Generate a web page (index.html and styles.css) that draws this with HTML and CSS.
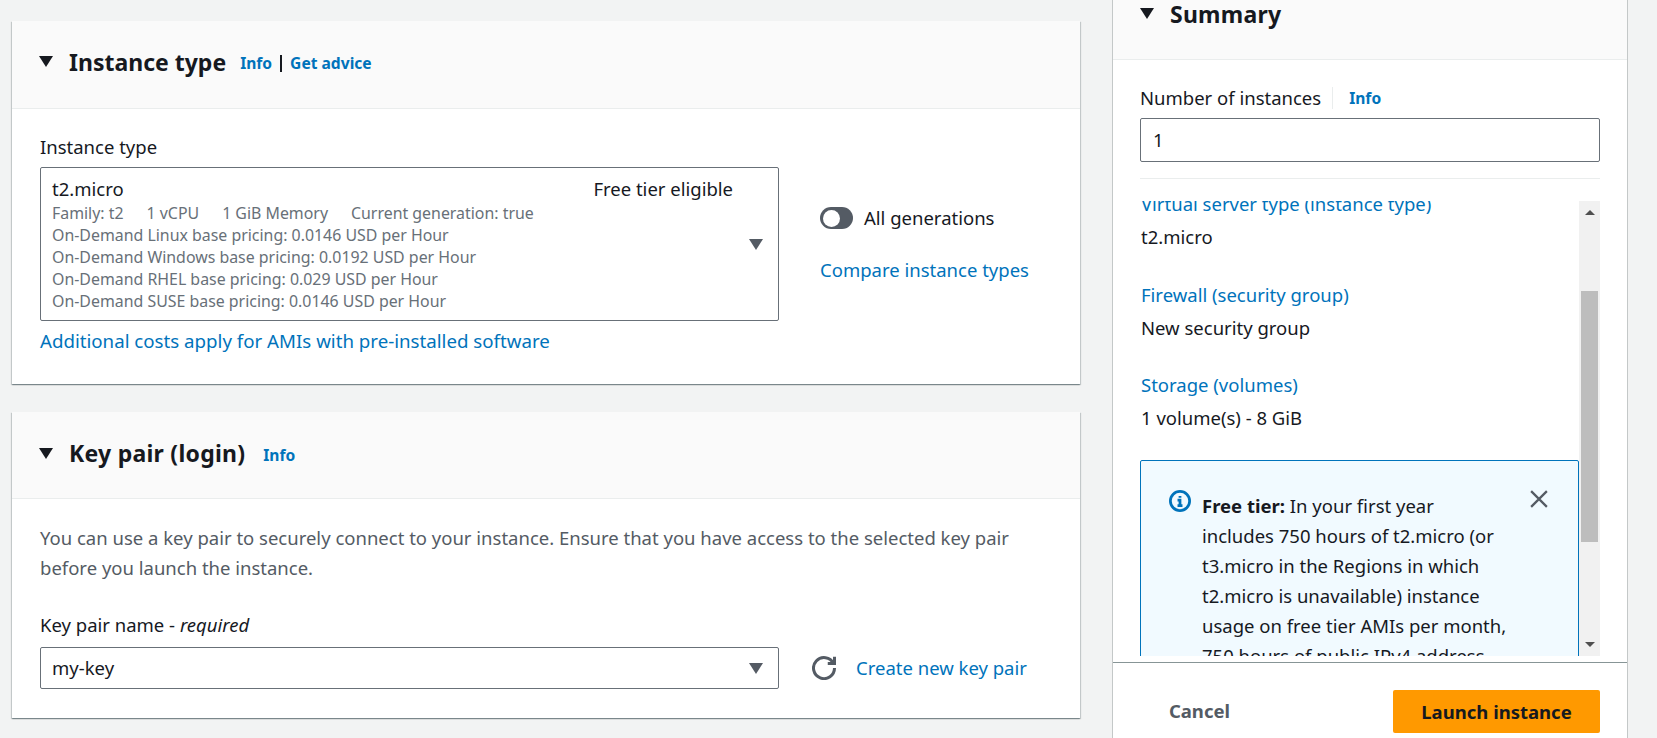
FILE: index.html
```html
<!DOCTYPE html>
<html lang="en">
<head>
    <meta charset="UTF-8">
    <meta name="viewport" content="width=device-width, initial-scale=1.0">
    <title>Launch an instance</title>
    <link rel="stylesheet" href="styles.css">
</head>
<body>
    <div class="page">
        <main class="left-col">
            <section class="card card-type">
                <div class="card-head head-type">
                    <svg class="caret" viewBox="0 0 14 11"><path d="M0 0h14L7 11z"/></svg>
                    <h2>Instance type</h2>
                    <div class="head-links"><a href="#">Info</a><span class="pipe"></span><a href="#">Get advice</a></div>
                </div>
                <div class="card-body body-type">
                    <label class="field-label">Instance type</label>
                    <div class="select-row type-row">
                        <div class="select select-tall">
                            <div class="select-main">
                                <div class="select-top"><span>t2.micro</span><span>Free tier eligible</span></div>
                                <div class="detail detail-specs"><span>Family: t2</span><span>1 vCPU</span><span>1 GiB Memory</span><span>Current generation: true</span></div>
                                <div class="detail">On-Demand Linux base pricing: 0.0146 USD per Hour</div>
                                <div class="detail">On-Demand Windows base pricing: 0.0192 USD per Hour</div>
                                <div class="detail">On-Demand RHEL base pricing: 0.029 USD per Hour</div>
                                <div class="detail">On-Demand SUSE base pricing: 0.0146 USD per Hour</div>
                            </div>
                            <svg class="arrow" viewBox="0 0 14 11"><path d="M0 0h14L7 11z"/></svg>
                        </div>
                        <div class="type-side">
                            <div class="toggle-row"><span class="toggle"><span class="knob"></span></span><span>All generations</span></div>
                            <a class="link" href="#">Compare instance types</a>
                        </div>
                    </div>
                    <a class="link costs" href="#">Additional costs apply for AMIs with pre-installed software</a>
                </div>
            </section>

            <section class="card card-key">
                <div class="card-head head-key">
                    <svg class="caret" viewBox="0 0 14 11"><path d="M0 0h14L7 11z"/></svg>
                    <h2>Key pair (login)</h2>
                    <div class="head-links"><a href="#">Info</a></div>
                </div>
                <div class="card-body body-key">
                    <p class="key-text">You can use a key pair to securely connect to your instance. Ensure that you have access to the selected key pair before you launch the instance.</p>
                    <label class="field-label key-label">Key pair name - <i>required</i></label>
                    <div class="select-row key-row">
                        <div class="select select-short">
                            <div class="select-main">my-key</div>
                            <svg class="arrow" viewBox="0 0 14 11"><path d="M0 0h14L7 11z"/></svg>
                        </div>
                        <svg class="refresh" viewBox="0 0 16 16"><path d="M10.5 5H15V.5"/><path d="M15 8a7 7 0 1 1-.7-3"/></svg>
                        <a class="link" href="#">Create new key pair</a>
                    </div>
                </div>
            </section>
        </main>

        <aside class="summary">
            <div class="summary-head">
                <svg class="caret" viewBox="0 0 14 11"><path d="M0 0h14L7 11z"/></svg>
                <h2>Summary</h2>
            </div>
            <div class="summary-body">
                <div class="count-label"><span>Number of instances</span><span class="count-sep"></span><a href="#">Info</a></div>
                <div class="count-input">1</div>
                <hr class="divider">
                <div class="scroll-area">
                    <div class="scroll-content">
                        <div class="scroll-inner">
                            <a class="link item-link" href="#">Virtual server type (instance type)</a>
                            <div class="item-value item-first">t2.micro</div>
                            <a class="link item-link" href="#">Firewall (security group)</a>
                            <div class="item-value">New security group</div>
                            <a class="link item-link" href="#">Storage (volumes)</a>
                            <div class="item-value">1 volume(s) - 8 GiB</div>
                            <div class="free-tier">
                                <svg class="info-icon" viewBox="0 0 16 16"><circle cx="8" cy="8" r="7"/><path d="M6.2 7.4H8v4M6.2 11.4h3.6M8 4.4v1.2"/></svg>
                                <p><b>Free tier:</b> In your first year includes 750 hours of t2.micro (or t3.micro in the Regions in which t2.micro is unavailable) instance usage on free tier AMIs per month, 750 hours of public IPv4 address usage per month, 30 GiB of EBS storage, 2 million I/Os, 1 GB of snapshots, and 100 GB of bandwidth to the internet.</p>
                                <svg class="close-icon" viewBox="0 0 16 16"><path d="M1 1l14 14M15 1L1 15"/></svg>
                            </div>
                        </div>
                    </div>
                    <div class="scrollbar">
                        <span class="sb-up"></span>
                        <span class="sb-thumb"></span>
                        <span class="sb-down"></span>
                    </div>
                </div>
            </div>
            <div class="summary-foot">
                <a class="cancel" href="#">Cancel</a>
                <button class="launch">Launch instance</button>
            </div>
        </aside>
    </div>
</body>
</html>
```

FILE: styles.css
```css
* {
    box-sizing: border-box;
}
html, body {
    margin: 0;
    height: 738px;
    overflow: hidden;
}
body {
    background: #f2f3f3;
    font-family: "Noto Sans", "Open Sans", sans-serif;
    font-size: 18.5px;
    line-height: 24px;
    color: #16191f;
}
a {
    color: #0073bb;
    text-decoration: none;
}
.page {
    display: flex;
    gap: 32px;
    padding: 0 29px 0 12px;
    height: 738px;
    overflow: hidden;
}

/* left column */
.left-col {
    width: 1069px;
    padding-top: 21px;
    display: flex;
    flex-direction: column;
    gap: 28px;
}
.card {
    background: #fff;
    box-shadow: 0 1px 1px 0 rgba(0,28,36,.3), 1px 1px 1px 0 rgba(0,28,36,.15), -1px 1px 1px 0 rgba(0,28,36,.15);
}
.card-head {
    display: flex;
    align-items: center;
    background: #fafafa;
    border-bottom: 1px solid #eaeded;
    padding-left: 27px;
}
.head-type {
    height: 88px;
    padding-bottom: 6px;
}
.head-key {
    height: 87px;
    padding-bottom: 4px;
}
.caret {
    width: 14px;
    height: 11px;
    fill: #16191f;
    flex: none;
}
.card-head h2 {
    margin: 0 0 0 16px;
    font-size: 23px;
    font-weight: 700;
    line-height: 28px;
}
.head-key h2 {
    letter-spacing: .25px;
}
.head-links {
    display: flex;
    align-items: center;
    margin: 3px 0 0 14px;
    font-size: 15.6px;
    font-weight: 700;
}
.head-key .head-links {
    margin-left: 18px;
}
.pipe {
    width: 2px;
    height: 17px;
    background: #16191f;
    margin: 0 8px;
}
.card-body {
    padding: 27px 28px 31px;
}
.field-label {
    display: block;
    line-height: 22px;
}
.select-row {
    display: flex;
}
.select {
    width: 739px;
    border: 1px solid #687078;
    border-radius: 2px;
    display: flex;
    align-items: center;
    padding: 0 15px 0 11px;
    flex: none;
}
.select-main {
    flex: 1;
    margin-right: 16px;
}
.arrow {
    width: 14px;
    height: 11px;
    fill: #545b64;
    flex: none;
}
.type-row {
    margin-top: 9px;
    gap: 41px;
}
.select-tall {
    height: 154px;
}
.select-top {
    display: flex;
    justify-content: space-between;
    margin-bottom: 1px;
}
.detail {
    font-size: 15.9px;
    line-height: 22px;
    color: #687078;
}
.detail-specs {
    display: flex;
    gap: 23px;
}
.type-side {
    padding-top: 39px;
}
.toggle-row {
    display: flex;
    align-items: center;
    gap: 11px;
}
.toggle {
    width: 33px;
    height: 22px;
    border-radius: 11px;
    background: #545b64;
    display: flex;
    align-items: center;
    padding-left: 3px;
}
.knob {
    width: 17px;
    height: 17px;
    border-radius: 50%;
    background: #fff;
}
.link {
    display: block;
}
.type-side .link {
    margin-top: 28px;
}
.costs {
    margin-top: 8px;
    font-size: 18.7px;
}
.body-key {
    padding: 24px 28px 29px;
}
.key-text {
    margin: 0;
    line-height: 30px;
    color: #545b64;
}
.key-label {
    margin-top: 31px;
}
.key-row {
    margin-top: 11px;
    align-items: center;
}
.select-short {
    height: 42px;
}
.refresh {
    width: 24px;
    height: 24px;
    margin: 0 20px 0 33px;
    fill: none;
    stroke: #545b64;
    stroke-width: 2;
    flex: none;
}

/* summary panel */
.summary {
    width: 516px;
    background: #fff;
    border-left: 1px solid #c4c8c8;
    border-right: 1px solid #c4c8c8;
    display: flex;
    flex-direction: column;
}
.summary-head {
    height: 60px;
    flex: none;
    background: #fafafa;
    border-bottom: 1px solid #eaeded;
    display: flex;
    align-items: center;
    padding: 0 0 32px 27px;
}
.summary-head h2 {
    margin: 0 0 0 16px;
    font-size: 23px;
    font-weight: 700;
    line-height: 26px;
    letter-spacing: .25px;
}
.summary-body {
    flex: 1;
    min-height: 0;
    padding: 27px 27px 6px;
    display: flex;
    flex-direction: column;
}
.count-label {
    display: flex;
    align-items: center;
    line-height: 22px;
}
.count-sep {
    width: 1px;
    height: 22px;
    background: #eaeded;
    margin: 0 16px 0 11px;
}
.count-label a {
    font-size: 15.6px;
    font-weight: 700;
}
.count-input {
    margin-top: 9px;
    height: 44px;
    flex: none;
    border: 1px solid #687078;
    border-radius: 2px;
    padding: 9px 12px;
}
.divider {
    margin: 16px 0 22px;
    border: 0;
    border-top: 1px solid #eaeded;
    width: 100%;
}
.scroll-area {
    flex: 1;
    min-height: 0;
    display: flex;
}
.scroll-content {
    width: 439px;
    overflow: hidden;
}
.scroll-inner {
    margin-top: -9px;
}
.item-link,
.item-value {
    padding-left: 1px;
}
.item-value {
    margin: 9px 0 33px;
}
.item-first {
    margin-bottom: 34px;
}
.free-tier {
    margin-top: -3px;
    background: #f1faff;
    border: 1px solid #0073bb;
    border-radius: 2px;
    padding: 29px 30px 20px 28px;
    display: flex;
    align-items: flex-start;
}
.free-tier p {
    margin: 1px 22px 0 11px;
    line-height: 30px;
    flex: 1;
}
.info-icon {
    width: 22px;
    height: 22px;
    flex: none;
    fill: none;
    stroke: #0073bb;
    stroke-width: 2;
}
.close-icon {
    width: 18px;
    height: 18px;
    flex: none;
    fill: none;
    stroke: #545b64;
    stroke-width: 2;
}
.scrollbar {
    width: 21px;
    background: #f1f1f1;
    display: flex;
    flex-direction: column;
    align-items: center;
}
.sb-up {
    margin-top: 9px;
    border: 5px solid transparent;
    border-top: 0;
    border-bottom-color: #505050;
}
.sb-thumb {
    width: 17px;
    height: 251px;
    margin-top: 76px;
    background: #bdbdbd;
}
.sb-down {
    margin-top: 100px;
    border: 5px solid transparent;
    border-bottom: 0;
    border-top-color: #505050;
}
.summary-foot {
    height: 76px;
    flex: none;
    border-top: 1px solid #879596;
    padding: 27px 27px 0 0;
    display: flex;
    justify-content: flex-end;
    align-items: flex-start;
}
.cancel {
    color: #545b64;
    font-weight: 700;
    line-height: 42px;
    margin-right: 163px;
}
.launch {
    width: 207px;
    height: 43px;
    border: 0;
    border-radius: 2px;
    background: #ff9900;
    color: #16191f;
    font: 700 18.5px "Noto Sans", "Open Sans", sans-serif;
}
```
